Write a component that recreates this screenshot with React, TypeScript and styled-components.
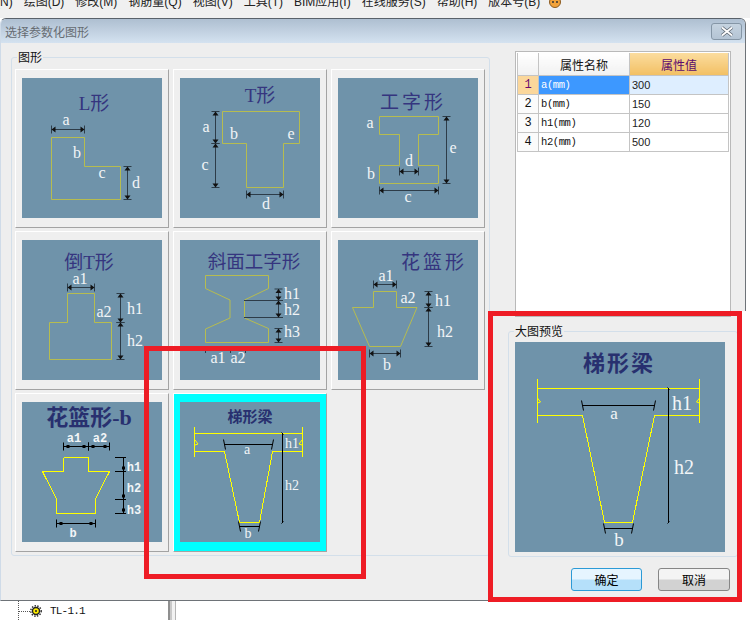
import React from 'react';
import styled, { createGlobalStyle } from 'styled-components';

type Variant = 'soft' | 'marked' | 'plain';

type Dim = [number, number, number, number];
type Label = [string, number, number, number?];

type Drawing = {
  title: string;
  titleX: number;
  titleY: number;
  titleSize: number;
  titleGap?: number;
  variant: Variant;
  size?: number;
  outlines: string[];
  dims: Dim[];
  guides?: Dim[];
  labels: Label[];
  breaks?: [number, number, number][];
};

const CJK = '"Noto Sans CJK SC", sans-serif';

const GlobalStyle = createGlobalStyle`
  html, body {
    margin: 0;
    background: #fff;
    overflow: hidden;
  }
  #root {
    width: 750px;
    height: 620px;
  }
`;

const Page = styled.div`
  position: relative;
  width: 750px;
  height: 620px;
  overflow: hidden;
  font-family: "Liberation Sans", ${CJK};
  color: #000;
  background: #fff;
`;

const MenuBar = styled.div`
  display: flex;
  gap: 11px;
  height: 18px;
  margin-left: -4px;
  overflow: hidden;
  background: #f0f0f0;
  font-size: 12px;
  line-height: 14px;
  color: #222;
`;

const MenuItem = styled.span`
  margin-top: -5px;
  white-space: nowrap;
`;

const MenuBadge = styled.svg`
  flex: none;
  margin: -4px 0 0 -3px;
`;

const Window = styled.div`
  width: 746px;
  height: 583px;
  box-sizing: border-box;
  display: flex;
  flex-direction: column;
  background: #eee;
  border: 1px solid #6e7378;
  border-top-color: #59616a;
  border-left-color: #cfdbe8;
  border-radius: 6px 6px 0 0;
  overflow: hidden;
`;

const TitleBar = styled.div`
  flex: none;
  height: 24px;
  display: flex;
  align-items: center;
  justify-content: space-between;
  padding: 0 3px 0 4px;
  background: linear-gradient(#aebfd1, #d4e2f0);
  font-size: 12px;
  color: #666c72;
`;

const CloseButton = styled.button`
  width: 31px;
  height: 17px;
  padding: 0;
  display: flex;
  align-items: center;
  justify-content: center;
  border: 1px solid #8596a6;
  border-radius: 3px;
  background: linear-gradient(#c5d3e0, #b4c4d4);
`;

const Body = styled.div`
  flex: 1;
  display: flex;
  align-items: flex-start;
`;

const ShapeGroup = styled.div`
  position: relative;
  width: 479px;
  height: 499px;
  box-sizing: border-box;
  margin: 14px 0 0 10px;
  padding: 11px 0 0 3px;
  border: 1px solid #d3dfea;
  border-radius: 3px;
`;

const GroupLegend = styled.span`
  position: absolute;
  top: -7px;
  left: 5px;
  padding: 0 1px;
  background: #eee;
  font-size: 12px;
  line-height: 14px;
  color: #111;
`;

const ShapeGrid = styled.div`
  display: grid;
  grid-template-columns: repeat(3, 154px);
  grid-auto-rows: 159px;
  gap: 3px 4px;
`;

const ShapeCell = styled.div<{ $selected?: boolean }>`
  box-sizing: border-box;
  padding: 8px 0 0 6px;
  border: 1px solid;
  border-color: #fff #a3a3a3 #a3a3a3 #fff;
  background: ${(props) => (props.$selected ? '#00ffff' : '#efefef')};
`;

const ShapeImage = styled.svg<{ $size: number }>`
  display: block;
  width: ${(props) => props.$size}px;
  height: ${(props) => props.$size}px;
  background: #6f93aa;
`;

const DrawingTitle = styled.text<{ $bold: boolean; $gap: number; $size: number }>`
  font-family: "Liberation Serif", ${CJK};
  font-size: ${(props) => props.$size}px;
  font-weight: ${(props) => (props.$bold ? 700 : 400)};
  letter-spacing: ${(props) => props.$gap}px;
  fill: ${(props) => (props.$bold ? '#28306f' : '#35357f')};
  text-anchor: middle;
`;

const DrawingLabel = styled.text<{ $bold: boolean; $size: number }>`
  font-family: ${(props) => (props.$bold ? '"Liberation Mono"' : '"Liberation Serif"')}, serif;
  font-size: ${(props) => props.$size}px;
  font-weight: ${(props) => (props.$bold ? 700 : 400)};
  fill: #f2f5f7;
  text-anchor: middle;
`;

const SidePanel = styled.div`
  width: 230px;
  margin-left: 18px;
  display: flex;
  flex-direction: column;
`;

const TableFrame = styled.div`
  width: 216px;
  height: 266px;
  box-sizing: border-box;
  margin: 8px 0 0 7px;
  padding: 1px;
  border: 1px solid #b9b9b9;
  background: #fff;
`;

const PropsTable = styled.table`
  border-collapse: collapse;
  table-layout: fixed;
  width: 211px;
  font-size: 12px;
`;

const HeadCell = styled.th<{ $accent?: boolean }>`
  height: 22px;
  padding: 0;
  border: 1px solid #c4c4c4;
  border-top: 0;
  font-weight: 400;
  font-size: 12px;
  background: ${(props) =>
    props.$accent ? 'linear-gradient(#fbdc9e, #f2c064)' : 'linear-gradient(#fff, #f1f1f1)'};
  color: ${(props) => (props.$accent ? '#5b0a6e' : '#111')};
`;

const IndexCell = styled.td<{ $active?: boolean }>`
  height: 18px;
  padding: 0;
  text-align: center;
  border: 1px solid #c4c4c4;
  font-family: "Liberation Mono", monospace;
  font-size: 12px;
  background: ${(props) => (props.$active ? '#fbd79b' : '#fbfbfb')};
  color: ${(props) => (props.$active ? '#6a0a70' : '#111')};
`;

const NameCell = styled.td<{ $active?: boolean }>`
  padding: 0 0 0 2px;
  border: 1px solid #c4c4c4;
  font-family: "Liberation Mono", monospace;
  font-size: 10.5px;
  letter-spacing: -0.4px;
  background: ${(props) => (props.$active ? '#3d98ff' : '#fff')};
  color: ${(props) => (props.$active ? '#fff' : '#111')};
`;

const ValueCell = styled.td<{ $active?: boolean }>`
  padding: 0 0 0 2px;
  border: 1px solid #c4c4c4;
  font-size: 11px;
  background: ${(props) => (props.$active ? '#deeeff' : '#fff')};
  color: #222;
`;

const PreviewGroup = styled.div`
  position: relative;
  height: 226px;
  box-sizing: border-box;
  margin-top: 14px;
  padding: 10px 0 0 6px;
  border: 1px solid #d3dfea;
  border-radius: 3px;
`;

const ButtonRow = styled.div`
  display: flex;
  justify-content: flex-end;
  gap: 16px;
  margin-top: 11px;
  padding-right: 8px;
`;

const DialogButton = styled.button<{ $primary?: boolean }>`
  height: 23px;
  width: ${(props) => (props.$primary ? 71 : 72)}px;
  padding: 0;
  border-radius: 3px;
  border: 1px solid ${(props) => (props.$primary ? '#2c9ad6' : '#868686')};
  background: ${(props) =>
    props.$primary
      ? 'linear-gradient(#e6f5ff 0 48%, #b5e0fa 52% 100%)'
      : 'linear-gradient(#f4f4f4 0 48%, #d2d2d2 52% 100%)'};
  font-family: "Liberation Sans", ${CJK};
  font-size: 12px;
  color: #000;
`;

const TreeStrip = styled.div`
  height: 19px;
  display: flex;
`;

const TreePane = styled.div`
  width: 168px;
  display: flex;
  align-items: center;
  gap: 7px;
  padding-left: 18px;
  box-sizing: border-box;
`;

const TreeText = styled.span`
  font-family: "Liberation Mono", monospace;
  font-size: 11px;
  letter-spacing: -0.8px;
  color: #111;
`;

const Splitter = styled.div`
  width: 10px;
  box-sizing: border-box;
  background: linear-gradient(90deg, #8f8f8f 0 2px, #c9c9c9 2px 4px, #f2f2f2 4px 7px, #b5b5b5 7px 8px, #fff 8px);
`;

const RedBox = styled.div<{ $left: number; $top: number; $width: number; $height: number }>`
  position: absolute;
  left: ${(props) => props.$left}px;
  top: ${(props) => props.$top}px;
  width: ${(props) => props.$width}px;
  height: ${(props) => props.$height}px;
  box-sizing: border-box;
  border: 5px solid #ee1c25;
  pointer-events: none;
`;

const OuterMask = styled.div`
  position: absolute;
  left: 742px;
  top: 311px;
  width: 8px;
  height: 291px;
  background: #fff;
`;

function Dimension({ dim, variant }: { dim: Dim; variant: Variant }) {
  const [x1, y1, x2, y2] = dim;
  const horizontal = y1 === y2;
  const ink = variant === 'soft' ? '#2d3c48' : '#000';
  const tick = (x: number, y: number, key: string) =>
    horizontal ? (
      <line key={key} x1={x} y1={y - 4} x2={x} y2={y + 4} stroke={ink} />
    ) : (
      <line key={key} x1={x - 4} y1={y} x2={x + 4} y2={y} stroke={ink} />
    );

  let ends: React.ReactNode = null;
  if (variant === 'soft') {
    const s = 4;
    const head = horizontal
      ? [
          `${x1},${y1} ${x1 + s},${y1 - 3} ${x1 + s},${y1 + 3}`,
          `${x2},${y2} ${x2 - s},${y2 - 3} ${x2 - s},${y2 + 3}`,
        ]
      : [
          `${x1},${y1} ${x1 - 3},${y1 + s} ${x1 + 3},${y1 + s}`,
          `${x2},${y2} ${x2 - 3},${y2 - s} ${x2 + 3},${y2 - s}`,
        ];
    ends = (
      <>
        {tick(x1, y1, 'a')}
        {tick(x2, y2, 'b')}
        {head.map((points) => (
          <polygon key={points} points={points} fill="#111" />
        ))}
      </>
    );
  } else if (variant === 'marked') {
    ends = horizontal ? (
      <>
        {tick(x1, y1, 'a')}
        {tick(x2, y2, 'b')}
        <rect x={x1 + 3} y={y1 - 1.5} width={3} height={3} fill="#000" />
        <rect x={x2 - 6} y={y2 - 1.5} width={3} height={3} fill="#000" />
      </>
    ) : (
      <>
        <line x1={x1 - 9} y1={y1} x2={x1 + 2} y2={y1} stroke="#000" shapeRendering="crispEdges" />
        <line x1={x2 - 9} y1={y2} x2={x2 + 2} y2={y2} stroke="#000" shapeRendering="crispEdges" />
        <rect x={x2 - 1.5} y={y2 - 5} width={3} height={3} fill="#000" />
      </>
    );
  } else {
    ends = (
      <>
        <path d={`M${x1 - 1} ${y1 - (horizontal ? 5 : 1)}L${x1 + 1} ${y1 + (horizontal ? 5 : 1)}`} stroke="#000" />
        <path d={`M${x2 + 1} ${y2 - (horizontal ? 5 : 1)}L${x2 - 1} ${y2 + (horizontal ? 5 : 1)}`} stroke="#000" />
      </>
    );
  }

  return (
    <g>
      <line x1={x1} y1={y1} x2={x2} y2={y2} stroke={ink} shapeRendering="crispEdges" strokeWidth={1} />
      {ends}
    </g>
  );
}

function ShapeDrawing({ drawing }: { drawing: Drawing }) {
  const size = drawing.size ?? 140;
  const soft = drawing.variant === 'soft';
  const bold = !soft;
  const line = soft ? '#b6bc50' : '#ffff00';
  return (
    <ShapeImage $size={size} viewBox={`0 0 ${size} ${size}`}>
      <DrawingTitle
        x={drawing.titleX}
        y={drawing.titleY}
        $size={drawing.titleSize}
        $bold={bold}
        $gap={drawing.titleGap ?? 0}
      >
        {drawing.title}
      </DrawingTitle>
      {drawing.outlines.map((points) => (
        <polyline
          key={points}
          points={points}
          fill="none"
          stroke={line}
          strokeWidth={1}
          shapeRendering={soft ? 'auto' : 'crispEdges'}
        />
      ))}
      {drawing.guides?.map((g) => (
        <line key={g.join()} x1={g[0]} y1={g[1]} x2={g[2]} y2={g[3]} stroke={soft ? '#2d3c48' : '#ffff00'} shapeRendering="crispEdges" />
      ))}
      {drawing.breaks?.map(([x, y, dir]) => (
        <path key={`${x}-${y}`} d={`M${x} ${y - 4}L${x + 3 * dir} ${y}L${x} ${y + 1}`} fill="none" stroke="#ffff00" />
      ))}
      {drawing.dims.map((dim) => (
        <Dimension key={dim.join()} dim={dim} variant={drawing.variant} />
      ))}
      {drawing.labels.map(([text, x, y, fontSize]) => (
        <DrawingLabel
          key={text + x}
          x={x}
          y={y}
          $size={fontSize ?? (drawing.variant === 'marked' ? 12 : soft ? 16 : 14)}
          $bold={drawing.variant === 'marked'}
        >
          {text}
        </DrawingLabel>
      ))}
    </ShapeImage>
  );
}

const trapezoidSmall: Drawing = {
  title: '梯形梁',
  titleX: 70,
  titleY: 20,
  titleSize: 15,
  variant: 'plain',
  outlines: [
    '14.5,25 14.5,55',
    '122.5,25 122.5,55',
    '14.5,31.5 122.5,31.5',
    '14.5,49.5 44.5,49.5 59.5,120.5 79.5,120.5 92.5,49.5 122.5,49.5',
  ],
  breaks: [
    [15, 42, 1],
    [122, 42, -1],
  ],
  dims: [
    [44.5, 42.5, 92.5, 42.5],
    [102.5, 31.5, 102.5, 120.5],
    [59.5, 124.5, 79.5, 124.5],
  ],
  labels: [
    ['a', 67, 52],
    ['h1', 112, 46],
    ['h2', 112, 88],
    ['b', 68, 136],
  ],
};

const drawings: Drawing[] = [
  {
    title: 'L形',
    titleX: 72,
    titleY: 32,
    titleSize: 19,
    variant: 'soft',
    outlines: ['29.5,59.5 62.5,59.5 62.5,88.5 98.5,88.5 98.5,121.5 29.5,121.5 29.5,59.5'],
    dims: [
      [29.5, 51.5, 62.5, 51.5],
      [105.5, 88.5, 105.5, 121.5],
    ],
    labels: [
      ['a', 44, 47],
      ['b', 55, 80],
      ['c', 80, 100],
      ['d', 114, 110],
    ],
  },
  {
    title: 'T形',
    titleX: 80,
    titleY: 24,
    titleSize: 19,
    variant: 'soft',
    outlines: ['42.5,33.5 119.5,33.5 119.5,65.5 103.5,65.5 103.5,109.5 66.5,109.5 66.5,65.5 42.5,65.5 42.5,33.5'],
    dims: [
      [35.5, 33.5, 35.5, 65.5],
      [35.5, 65.5, 35.5, 109.5],
      [66.5, 116.5, 103.5, 116.5],
    ],
    labels: [
      ['a', 26, 54],
      ['c', 25, 92],
      ['b', 54, 61],
      ['e', 111, 61],
      ['d', 86, 131],
    ],
  },
  {
    title: '工字形',
    titleX: 75,
    titleY: 31,
    titleSize: 19,
    titleGap: 3,
    variant: 'soft',
    outlines: [
      '41.5,38.5 100.5,38.5 100.5,56.5 80.5,56.5 80.5,87.5 100.5,87.5 100.5,105.5 41.5,105.5 41.5,87.5 61.5,87.5 61.5,56.5 41.5,56.5 41.5,38.5',
    ],
    dims: [
      [108.5, 38.5, 108.5, 105.5],
      [61.5, 93.5, 80.5, 93.5],
      [41.5, 112.5, 100.5, 112.5],
    ],
    labels: [
      ['a', 32, 50],
      ['b', 33, 101],
      ['e', 115, 75],
      ['d', 71, 88],
      ['c', 70, 124],
    ],
  },
  {
    title: '倒T形',
    titleX: 67,
    titleY: 29,
    titleSize: 19,
    variant: 'soft',
    outlines: ['45.5,53.5 72.5,53.5 72.5,82.5 89.5,82.5 89.5,119.5 27.5,119.5 27.5,82.5 45.5,82.5 45.5,53.5'],
    dims: [
      [45.5, 47.5, 72.5, 47.5],
      [98.5, 53.5, 98.5, 82.5],
      [98.5, 82.5, 98.5, 119.5],
    ],
    labels: [
      ['a1', 58, 44],
      ['a2', 82, 77],
      ['h1', 113, 74],
      ['h2', 113, 106],
    ],
  },
  {
    title: '斜面工字形',
    titleX: 74,
    titleY: 28,
    titleSize: 18.5,
    variant: 'soft',
    outlines: [
      '25.5,35.5 88.5,35.5 88.5,48.5 64.5,60 64.5,78 88.5,88.5 88.5,102.5 25.5,102.5 25.5,89 50,78 50,60 25.5,48.5 25.5,35.5',
    ],
    guides: [
      [64, 60.5, 103, 60.5],
      [64, 77.5, 103, 77.5],
      [25.5, 106, 25.5, 113],
      [50.5, 106, 50.5, 113],
      [65.5, 106, 65.5, 113],
    ],
    dims: [
      [98.5, 49, 98.5, 60.5],
      [98.5, 60.5, 98.5, 77.5],
      [98.5, 88.5, 98.5, 102.5],
    ],
    labels: [
      ['h1', 112, 59],
      ['h2', 112, 75],
      ['h3', 112, 97],
      ['a1', 38, 123],
      ['a2', 58, 123],
    ],
  },
  {
    title: '花篮形',
    titleX: 96,
    titleY: 29,
    titleSize: 19,
    titleGap: 3,
    variant: 'soft',
    outlines: ['35.5,51.5 58.5,51.5 58.5,67.5 79,67.5 62.5,106.5 31.5,106.5 14.5,67.5 35.5,67.5 35.5,51.5'],
    dims: [
      [35.5, 44.5, 58.5, 44.5],
      [90.5, 51.5, 90.5, 67.5],
      [90.5, 67.5, 90.5, 106.5],
      [31.5, 113.5, 62.5, 113.5],
    ],
    labels: [
      ['a1', 48, 41],
      ['a2', 70, 63],
      ['h1', 105, 66],
      ['h2', 107, 97],
      ['b', 49, 130],
    ],
  },
  {
    title: '花篮形-b',
    titleX: 67,
    titleY: 23,
    titleSize: 22,
    variant: 'marked',
    outlines: ['41.5,55.5 66.5,55.5 66.5,69.5 87.5,69.5 73.5,97 73.5,111.5 34.5,111.5 34.5,97 20.5,69.5 41.5,69.5 41.5,55.5'],
    dims: [
      [41.5, 44.5, 66.5, 44.5],
      [66.5, 44.5, 87.5, 44.5],
      [34.5, 121.5, 73.5, 121.5],
      [101.5, 55.5, 101.5, 69.5],
      [101.5, 69.5, 101.5, 97.5],
      [101.5, 97.5, 101.5, 111.5],
    ],
    labels: [
      ['a1', 52, 40],
      ['a2', 78, 40],
      ['h1', 112, 69],
      ['h2', 112, 90],
      ['h3', 112, 112],
      ['b', 51, 135],
    ],
  },
  trapezoidSmall,
];

const trapezoidLarge: Drawing = {
  title: '梯形梁',
  titleX: 104,
  titleY: 29,
  titleSize: 22,
  titleGap: 2,
  variant: 'plain',
  size: 210,
  outlines: [
    '22.5,37 22.5,81',
    '184.5,37 184.5,81',
    '22.5,46.5 184.5,46.5',
    '22.5,73.5 67.5,73.5 89.5,180.5 117.5,180.5 139.5,73.5 184.5,73.5',
  ],
  breaks: [
    [22.5, 60, 1],
    [184.5, 60, -1],
  ],
  dims: [
    [67.5, 63.5, 139.5, 63.5],
    [153.5, 46.5, 153.5, 180.5],
    [89.5, 186.5, 117.5, 186.5],
  ],
  labels: [
    ['a', 99, 77, 17],
    ['h1', 167, 68, 20],
    ['h2', 169, 132, 20],
    ['b', 104, 204, 19],
  ],
};

const menuItems = ['(N)', '绘图(D)', '修改(M)', '钢筋量(Q)', '视图(V)', '工具(T)', 'BIM应用(I)', '在线服务(S)', '帮助(H)', '版本号(B)'];

const properties = [
  { name: 'a(mm)', value: '300' },
  { name: 'b(mm)', value: '150' },
  { name: 'h1(mm)', value: '120' },
  { name: 'h2(mm)', value: '500' },
];

function App() {
  return (
    <Page>
      <GlobalStyle />
      <MenuBar>
        {menuItems.map((item) => (
          <MenuItem key={item}>{item}</MenuItem>
        ))}
        <MenuBadge width="14" height="12" viewBox="0 0 14 12">
          <circle cx="7" cy="6" r="5.5" fill="#f2a23a" stroke="#8a5a20" />
          <circle cx="5" cy="6" r="1" fill="#333" />
          <circle cx="9" cy="6" r="1" fill="#333" />
        </MenuBadge>
      </MenuBar>
      <Window>
        <TitleBar>
          <span>选择参数化图形</span>
          <CloseButton aria-label="关闭">
            <svg width="14" height="11" viewBox="0 0 14 11">
              <path d="M2 1.5L12 9.5M12 1.5L2 9.5" stroke="#5d6670" strokeWidth="3.4" />
              <path d="M2 1.5L12 9.5M12 1.5L2 9.5" stroke="#fff" strokeWidth="1.8" />
            </svg>
          </CloseButton>
        </TitleBar>
        <Body>
          <ShapeGroup>
            <GroupLegend>图形</GroupLegend>
            <ShapeGrid>
              {drawings.map((drawing) => (
                <ShapeCell key={drawing.title} $selected={drawing === trapezoidSmall}>
                  <ShapeDrawing drawing={drawing} />
                </ShapeCell>
              ))}
            </ShapeGrid>
          </ShapeGroup>
          <SidePanel>
            <TableFrame>
              <PropsTable>
                <colgroup>
                  <col width="21" />
                  <col width="91" />
                  <col width="99" />
                </colgroup>
                <thead>
                  <tr>
                    <HeadCell />
                    <HeadCell>属性名称</HeadCell>
                    <HeadCell $accent>属性值</HeadCell>
                  </tr>
                </thead>
                <tbody>
                  {properties.map((row, index) => (
                    <tr key={row.name}>
                      <IndexCell $active={index === 0}>{index + 1}</IndexCell>
                      <NameCell $active={index === 0}>{row.name}</NameCell>
                      <ValueCell $active={index === 0}>{row.value}</ValueCell>
                    </tr>
                  ))}
                </tbody>
              </PropsTable>
            </TableFrame>
            <PreviewGroup>
              <GroupLegend>大图预览</GroupLegend>
              <ShapeDrawing drawing={trapezoidLarge} />
            </PreviewGroup>
            <ButtonRow>
              <DialogButton $primary>确定</DialogButton>
              <DialogButton>取消</DialogButton>
            </ButtonRow>
          </SidePanel>
        </Body>
      </Window>
      <TreeStrip>
        <TreePane>
          <svg width="25" height="19" viewBox="0 0 25 19">
            <path d="M0.5 0V19M1 10.5H12" stroke="#555" strokeDasharray="1 1" />
            <circle cx="18" cy="10" r="3.5" fill="#ffee00" stroke="#222" strokeWidth="1.4" />
            <circle cx="18" cy="10" r="5.2" fill="none" stroke="#222" strokeWidth="1.4" strokeDasharray="1.4 1.4" />
            <circle cx="18" cy="10" r="1" fill="#222" />
          </svg>
          <TreeText>TL-1.1</TreeText>
        </TreePane>
        <Splitter />
      </TreeStrip>
      <OuterMask />
      <RedBox $left={144} $top={346} $width={222} $height={233} />
      <RedBox $left={488} $top={311} $width={254} $height={291} />
    </Page>
  );
}

export default App;
